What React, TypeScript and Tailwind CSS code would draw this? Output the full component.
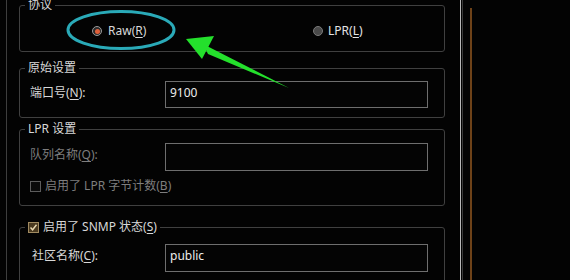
import React from "react";

const font = { fontFamily: '"Noto Sans", "Noto Sans CJK SC", sans-serif' };

function Mn({ children }: { children: React.ReactNode }) {
  // mnemonic letter, underlined like a Windows dialog
  return <span className="underline underline-offset-2">{children}</span>;
}

function Radio({ checked }: { checked?: boolean }) {
  return checked ? (
    <span className="w-[10px] h-[10px] rounded-full border border-[#9a9a9a] bg-[#2a2a2a] flex items-center justify-center">
      <span className="w-[5px] h-[5px] rounded-full bg-[#e0603a]" />
    </span>
  ) : (
    <span className="w-[10px] h-[10px] rounded-full border border-[#7a7a7a] bg-[#4a4a4a]" />
  );
}

function Check({ checked }: { checked?: boolean }) {
  if (!checked)
    return <span className="w-[11px] h-[11px] border border-[#5c5c5c] bg-[#0a0a0a]" />;
  return (
    <span className="w-[11px] h-[11px] border border-[#a08a60] bg-[#4a3a20] flex items-center justify-center">
      <svg width="9" height="9" viewBox="0 0 9 9">
        <path d="M1.5 4.5 L3.6 6.8 L7.5 1.8" stroke="#e8d8b0" strokeWidth="1.4" fill="none" />
      </svg>
    </span>
  );
}

function Field({ value }: { value?: string }) {
  return (
    <div className="flex-1 h-full border border-[#6e6e6e] bg-[#040404] flex items-center pl-[4px] pb-[4px] text-[#ececec]">
      {value}
    </div>
  );
}

export default function App() {
  return (
    <div
      className="relative w-[570px] h-[280px] overflow-hidden bg-[#030303] flex text-[12px] leading-[12px] text-[#d8d8d8]"
      style={font}
    >
      <div className="w-[6px] shrink-0" />
      <div className="w-px shrink-0 bg-[#3e3e3e]" />
      <div className="w-[12px] shrink-0" />

      {/* dialog groups */}
      <div className="w-[426px] shrink-0 flex flex-col -mt-px">
        <fieldset className="shrink-0 h-[53px] border border-[#404040] rounded-[3px]">
          <legend className="ml-[5px] px-[3px] h-[12px]">协议</legend>
          <div className="h-[40px] flex items-center pl-[72px]">
            <div className="w-[221px] flex items-center gap-[6px]">
              <Radio checked />
              <span>
                Raw(<Mn>R</Mn>)
              </span>
            </div>
            <div className="flex items-center gap-[5px] text-[#e4e4e4]">
              <Radio />
              <span>
                LPR(<Mn>L</Mn>)
              </span>
            </div>
          </div>
        </fieldset>

        <fieldset className="shrink-0 mt-[10px] h-[56px] border border-[#404040] rounded-[3px]">
          <legend className="ml-[5px] px-[3px] h-[12px]">原始设置</legend>
          <div className="mt-[7px] h-[27px] flex items-center pl-[10px] pr-[16px]">
            <span className="w-[135px] pb-[4px]">
              端口号(<Mn>N</Mn>):
            </span>
            <Field value="9100" />
          </div>
        </fieldset>

        <fieldset className="shrink-0 mt-[5px] h-[83px] border border-[#404040] rounded-[3px]">
          <legend className="ml-[5px] px-[3px] h-[12px]">LPR 设置</legend>
          <div className="mt-[8px] h-[28px] flex items-center pl-[10px] pr-[16px]">
            <span className="w-[135px] pb-[4px] text-[#7e7e7e]">
              队列名称(<Mn>Q</Mn>):
            </span>
            <Field />
          </div>
          <div className="mt-[9px] flex items-center gap-[4px] pl-[10px] text-[#7e7e7e]">
            <Check />
            <span>
              启用了 LPR 字节计数(<Mn>B</Mn>)
            </span>
          </div>
        </fieldset>

        <fieldset className="shrink-0 mt-[15px] h-[80px] border border-[#404040] rounded-[3px]">
          <legend className="ml-[5px] px-[3px] h-[12px] flex items-center gap-[4px]">
            <Check checked />
            <span>
              启用了 SNMP 状态(<Mn>S</Mn>)
            </span>
          </legend>
          <div className="mt-[11px] h-[28px] flex items-center pl-[12px] pr-[16px]">
            <span className="w-[133px] pb-[4px]">
              社区名称(<Mn>C</Mn>):
            </span>
            <Field value="public" />
          </div>
        </fieldset>
      </div>

      {/* window frame edges */}
      <div className="w-[15px] shrink-0" />
      <div className="w-px shrink-0 bg-[#b8b8b8]" />
      <div className="w-px shrink-0" />
      <div className="w-px shrink-0 bg-[#3a3a3a]" />
      <div className="w-[7px] shrink-0" />
      <div className="w-[2px] shrink-0 mt-[8px] bg-[#6e4218]" />
      <div className="flex-1" />

      {/* annotation: circle + arrow */}
      <svg className="absolute inset-0 pointer-events-none" width="570" height="280">
        <ellipse cx="121" cy="30" rx="53" ry="18.5" fill="none" stroke="#2aaab8" strokeWidth="3" />
        <polygon points="186,39 214,36 202,59" fill="#24e02c" />
        <polygon points="203,44 208,54 289,88" fill="#24e02c" />
      </svg>
    </div>
  );
}
